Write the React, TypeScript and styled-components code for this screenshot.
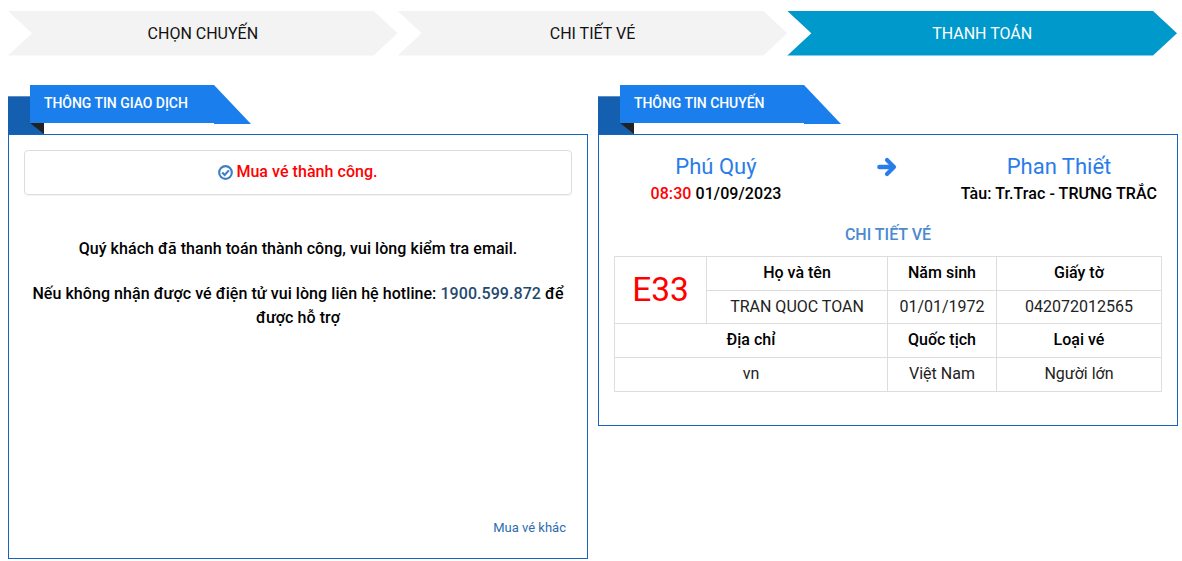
import React from "react";
import styled, { createGlobalStyle } from "styled-components";

const Global = createGlobalStyle`
  html, body { margin: 0; padding: 0; background: #fff; }
  body { font-family: Roboto, "Liberation Sans", sans-serif; font-size: 16px; color: #000; }
`;

const Page = styled.div`
  width: 1182px;
  height: 561px;
  box-sizing: border-box;
  padding: 11px 4px 0 8px;
  overflow: hidden;
`;

const Steps = styled.div`
  display: flex;
  width: 1169px;
`;

const Step = styled.div<{ $active?: boolean }>`
  flex: 1;
  height: 44.5px;
  display: flex;
  align-items: center;
  justify-content: center;
  font-size: 16px;
  background: ${(p) => (p.$active ? "#0099cc" : "#f3f3f3")};
  color: ${(p) => (p.$active ? "#fff" : "#111")};
  font-weight: 400;
  clip-path: polygon(0 0, calc(100% - 24px) 0, 100% 50%, calc(100% - 24px) 100%, 0 100%, 24px 50%);
`;

const Columns = styled.div`
  display: grid;
  grid-template-columns: 580px 580px;
  gap: 10px;
  margin-top: 29.5px;
  align-items: start;
`;

const Head = styled.div`
  position: relative;
  height: 49px;
  padding-left: 22px;
  &::before {
    content: "";
    position: absolute;
    left: 0;
    top: 11px;
    width: 36px;
    height: 38px;
    box-sizing: border-box;
    background: #155fb0;
    border-top: 1px solid #5f8fc5;
  }
`;

const Ribbon = styled.div`
  position: relative;
  display: inline-block;
  box-sizing: border-box;
  width: 184px;
  height: 38px;
  line-height: 36px;
  padding-left: 14px;
  font-size: 14px;
  font-weight: 500;
  letter-spacing: -0.05px;
  color: #fff;
  background: #1a7eed;
  &::before {
    content: "";
    position: absolute;
    left: 0;
    top: 38px;
    border-style: solid;
    border-width: 0 14px 11px 0;
    border-color: transparent #222 transparent transparent;
  }
  &::after {
    content: "";
    position: absolute;
    left: 100%;
    top: 0;
    width: 37px;
    height: 39px;
    background: #1a7eed;
    clip-path: polygon(0 0, 100% 100%, 0 100%);
  }
`;

const Panel = styled.div<{ $height: number }>`
  box-sizing: border-box;
  height: ${(p) => p.$height}px;
  border: 1px solid #1565c0;
  padding: 15px;
  display: flex;
  flex-direction: column;
`;

const Alert = styled.div`
  box-sizing: border-box;
  height: 45px;
  padding-bottom: 2px;
  border: 1px solid #ddd;
  border-radius: 4px;
  box-shadow: 0 1px 1px rgba(0, 0, 0, 0.05);
  display: flex;
  align-items: center;
  justify-content: center;
  gap: 3px;
  color: #ff0000;
  font-weight: 500;
  letter-spacing: 0.05px;
`;

const CheckIcon = styled.svg`
  width: 15px;
  height: 15px;
  color: #3f7fc4;
  margin-top: 1px;
`;

const Message = styled.p`
  margin: 42px 0 0;
  text-align: center;
  font-weight: 500;
  letter-spacing: 0.06px;
  line-height: 24px;
  & + & { margin-top: 21px; }
`;

const Hotline = styled.span`
  color: #1f4a70;
`;

const Footer = styled.div`
  margin-top: auto;
  padding: 0 6px 6px 0;
  text-align: right;
  font-size: 13px;
  line-height: 18px;
  color: #2c6db0;
`;

const Route = styled.div`
  display: grid;
  grid-template-columns: 204px 1fr 206px;
  align-items: start;
  text-align: center;
  padding-top: 1px;
`;

const City = styled.div`
  font-size: 22px;
  line-height: 32px;
  color: #2a7de9;
`;

const Sub = styled.div`
  font-weight: 500;
  letter-spacing: 0.07px;
  line-height: 22px;
  white-space: nowrap;
`;

const TrainSub = styled(Sub)`
  text-align: right;
  padding-right: 5px;
`;

const Red = styled.span`
  color: #ff0000;
`;

const Arrow = styled.div`
  height: 32px;
  display: flex;
  align-items: center;
  justify-content: center;
  color: #2a7de9;
`;

const ArrowIcon = styled.svg`
  width: 20px;
  height: 20px;
`;

const DetailTitle = styled.div`
  margin-top: 18.5px;
  text-align: center;
  font-weight: 500;
  line-height: 22px;
  color: #4a8bd0;
`;

const Table = styled.table`
  margin-top: 10.5px;
  width: 547px;
  border-collapse: collapse;
  table-layout: fixed;
`;

const Cell = styled.td`
  border: 1px solid #ddd;
  height: 33.5px;
  padding: 0;
  box-sizing: border-box;
  text-align: center;
  vertical-align: middle;
  font-size: 16px;
  font-weight: 400;
  color: #222;
`;

const HeadCell = styled(Cell).attrs({ as: "th" })`
  font-weight: 500;
  color: #000;
  padding-bottom: 2px;
`;

const LastCell = styled(Cell)`
  height: 34px;
  padding-bottom: 2px;
`;

const Seat = styled(Cell)`
  font-size: 33.5px;
  color: #ff0000;
  padding-bottom: 2px;
`;

export default function App() {
  return (
    <Page>
      <Global />
      <Steps>
        <Step>CHỌN CHUYẾN</Step>
        <Step>CHI TIẾT VÉ</Step>
        <Step $active>THANH TOÁN</Step>
      </Steps>
      <Columns>
        <section>
          <Head><Ribbon>THÔNG TIN GIAO DỊCH</Ribbon></Head>
          <Panel $height={425}>
            <Alert>
              <CheckIcon viewBox="0 0 14 14" fill="none" stroke="currentColor" strokeWidth="2">
                <circle cx="7" cy="7" r="5.9" />
                <polyline points="3.9,7 6.2,9.3 10.2,5" />
              </CheckIcon>
              Mua vé thành công.
            </Alert>
            <Message>Quý khách đã thanh toán thành công, vui lòng kiểm tra email.</Message>
            <Message>
              Nếu không nhận được vé điện tử vui lòng liên hệ hotline: <Hotline>1900.599.872</Hotline> để được hỗ trợ
            </Message>
            <Footer>Mua vé khác</Footer>
          </Panel>
        </section>
        <section>
          <Head><Ribbon>THÔNG TIN CHUYẾN</Ribbon></Head>
          <Panel $height={292}>
            <Route>
              <div>
                <City>Phú Quý</City>
                <Sub><Red>08:30</Red> 01/09/2023</Sub>
              </div>
              <Arrow>
                <ArrowIcon viewBox="0 0 20 20" fill="none" stroke="currentColor" strokeLinejoin="round" strokeLinecap="round">
                  <path d="M2.5 10H15" strokeWidth="4.6" />
                  <polyline points="10,3 17,10 10,17" strokeWidth="4.2" />
                </ArrowIcon>
              </Arrow>
              <div>
                <City>Phan Thiết</City>
                <TrainSub>Tàu: Tr.Trac - TRƯNG TRẮC</TrainSub>
              </div>
            </Route>
            <DetailTitle>CHI TIẾT VÉ</DetailTitle>
            <Table>
              <colgroup>
                <col width="92" />
                <col width="181" />
                <col width="109" />
                <col width="165" />
              </colgroup>
              <tbody>
                <tr>
                  <Seat rowSpan={2}>E33</Seat>
                  <HeadCell>Họ và tên</HeadCell>
                  <HeadCell>Năm sinh</HeadCell>
                  <HeadCell>Giấy tờ</HeadCell>
                </tr>
                <tr>
                  <Cell>TRAN QUOC TOAN</Cell>
                  <Cell>01/01/1972</Cell>
                  <Cell>042072012565</Cell>
                </tr>
                <tr>
                  <HeadCell colSpan={2}>Địa chỉ</HeadCell>
                  <HeadCell>Quốc tịch</HeadCell>
                  <HeadCell>Loại vé</HeadCell>
                </tr>
                <tr>
                  <LastCell colSpan={2}>vn</LastCell>
                  <LastCell>Việt Nam</LastCell>
                  <LastCell>Người lớn</LastCell>
                </tr>
              </tbody>
            </Table>
          </Panel>
        </section>
      </Columns>
    </Page>
  );
}
